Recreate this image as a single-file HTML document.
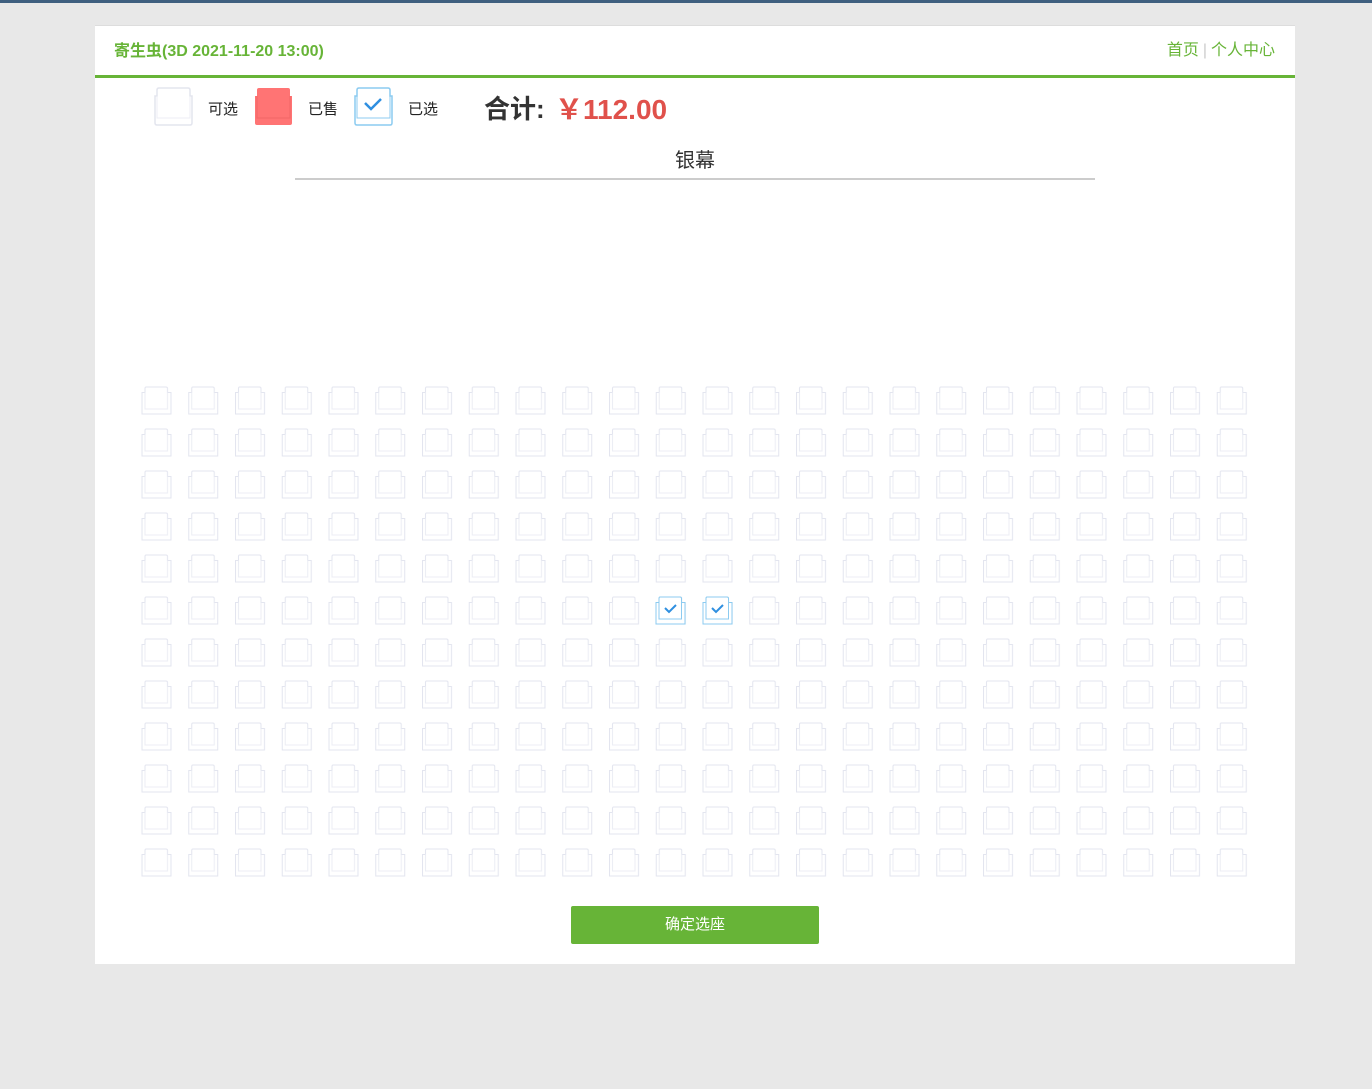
<!DOCTYPE html>
<html><head><meta charset="utf-8"><style>
body{margin:0;width:1372px;height:1089px;background:#e8e8e8;font-family:"Liberation Sans","Noto Sans CJK SC",sans-serif;position:relative;overflow:hidden}
.top{position:absolute;left:0;top:0;width:1372px;height:3px;background:#3f5f7f}
.box{position:absolute;left:95px;top:25px;width:1200px;height:939px;background:#fff;border-top:1px solid #ddd;box-sizing:border-box}
.hd{position:absolute;left:0;top:0;width:1200px;height:49px;border-bottom:3px solid #67b437}
.t{position:absolute;left:19px;top:11px;color:#67b437;font-weight:bold;font-size:16px}
.nav{position:absolute;right:20px;top:10px;color:#67b437;font-size:16px}
.nav span{color:#ccc;margin:0 4px}
.abs{position:absolute}
.lg{font-size:15px;color:#222}
.btn{position:absolute;left:476px;top:880px;width:248px;height:38px;background:#67b437;color:#fff;font-size:15px;text-align:center;line-height:38px;border-radius:2px}
</style></head><body>
<div class="top"></div>
<div class="box">
<div class="hd"><div class="t">寄生虫(3D 2021-11-20 13:00)</div><div class="nav">首页<span>|</span>个人中心</div></div>
<svg class="abs" style="left:58px;top:61px" width="50" height="42"><path d="M6,1H35Q37,1 37,3V9H39V36Q39,38 37,38H4Q2,38 2,36V9H4V3Q4,1 6,1Z" fill="#fff" stroke="#e3e5ee" stroke-width="1.5"/><path d="M4,9V31H37V9" fill="none" stroke="#eceef4"/></svg>
<div class="abs lg" style="left:113px;top:72px">可选</div>
<svg class="abs" style="left:158px;top:61px" width="50" height="42"><path d="M6,1H35Q37,1 37,3V9H39V36Q39,38 37,38H4Q2,38 2,36V9H4V3Q4,1 6,1Z" fill="#ff7474"/><path d="M4,9V31H37V9" fill="none" stroke="#f26666"/></svg>
<div class="abs lg" style="left:213px;top:72px">已售</div>
<svg class="abs" style="left:258px;top:61px" width="50" height="42"><path d="M6,1H35Q37,1 37,3V9H39V36Q39,38 37,38H4Q2,38 2,36V9H4V3Q4,1 6,1Z" fill="#fff" stroke="#8ccbf0" stroke-width="1.5"/><path d="M4,9V31H37V9" fill="none" stroke="#8ccbf0"/><path d="M12,16L18,22L28,12" fill="none" stroke="#2f8fe0" stroke-width="2.5"/></svg>
<div class="abs lg" style="left:313px;top:72px">已选</div>
<div class="abs" style="left:389px;top:63px;font-size:26px;font-weight:bold;color:#333">合计:</div>
<div class="abs" style="left:460px;top:62px;font-size:28px;font-weight:bold;color:#e0514b">￥112.00</div>
<div class="abs" style="left:0;width:1200px;top:118px;text-align:center;font-size:20px;color:#333">银幕</div>
<div class="abs" style="left:200px;top:152px;width:800px;height:2px;background:#ccc"></div>
<svg class="abs" style="left:0;top:0" width="1200" height="939">
<defs><pattern id="p" x="46" y="360" width="46.75" height="42" patternUnits="userSpaceOnUse">
<path d="M5,1H25Q26.5,1 26.5,2.5V6.5H30V28H1V6.5H4V2.5Q4,1 5,1Z" fill="#fff" stroke="#e3e5ef" stroke-width="1"/><path d="M4,6.5V23H26.5V6.5" fill="none" stroke="#eceef4"/>
</pattern></defs>
<rect x="46" y="360" width="1122" height="504" fill="url(#p)"/>
<g transform="translate(560,570)"><path d="M5,1H25Q26.5,1 26.5,2.5V6.5H30V28H1V6.5H4V2.5Q4,1 5,1Z" fill="#fff" stroke="#8ccbf0"/><path d="M4,6.5V23H26.5V6.5" fill="none" stroke="#8ccbf0"/><path d="M10,12L14,16L21,9" fill="none" stroke="#2f8fe0" stroke-width="2"/></g>
<g transform="translate(607,570)"><path d="M5,1H25Q26.5,1 26.5,2.5V6.5H30V28H1V6.5H4V2.5Q4,1 5,1Z" fill="#fff" stroke="#8ccbf0"/><path d="M4,6.5V23H26.5V6.5" fill="none" stroke="#8ccbf0"/><path d="M10,12L14,16L21,9" fill="none" stroke="#2f8fe0" stroke-width="2"/></g>
</svg>
<div class="btn">确定选座</div>
</div>
</body></html>
